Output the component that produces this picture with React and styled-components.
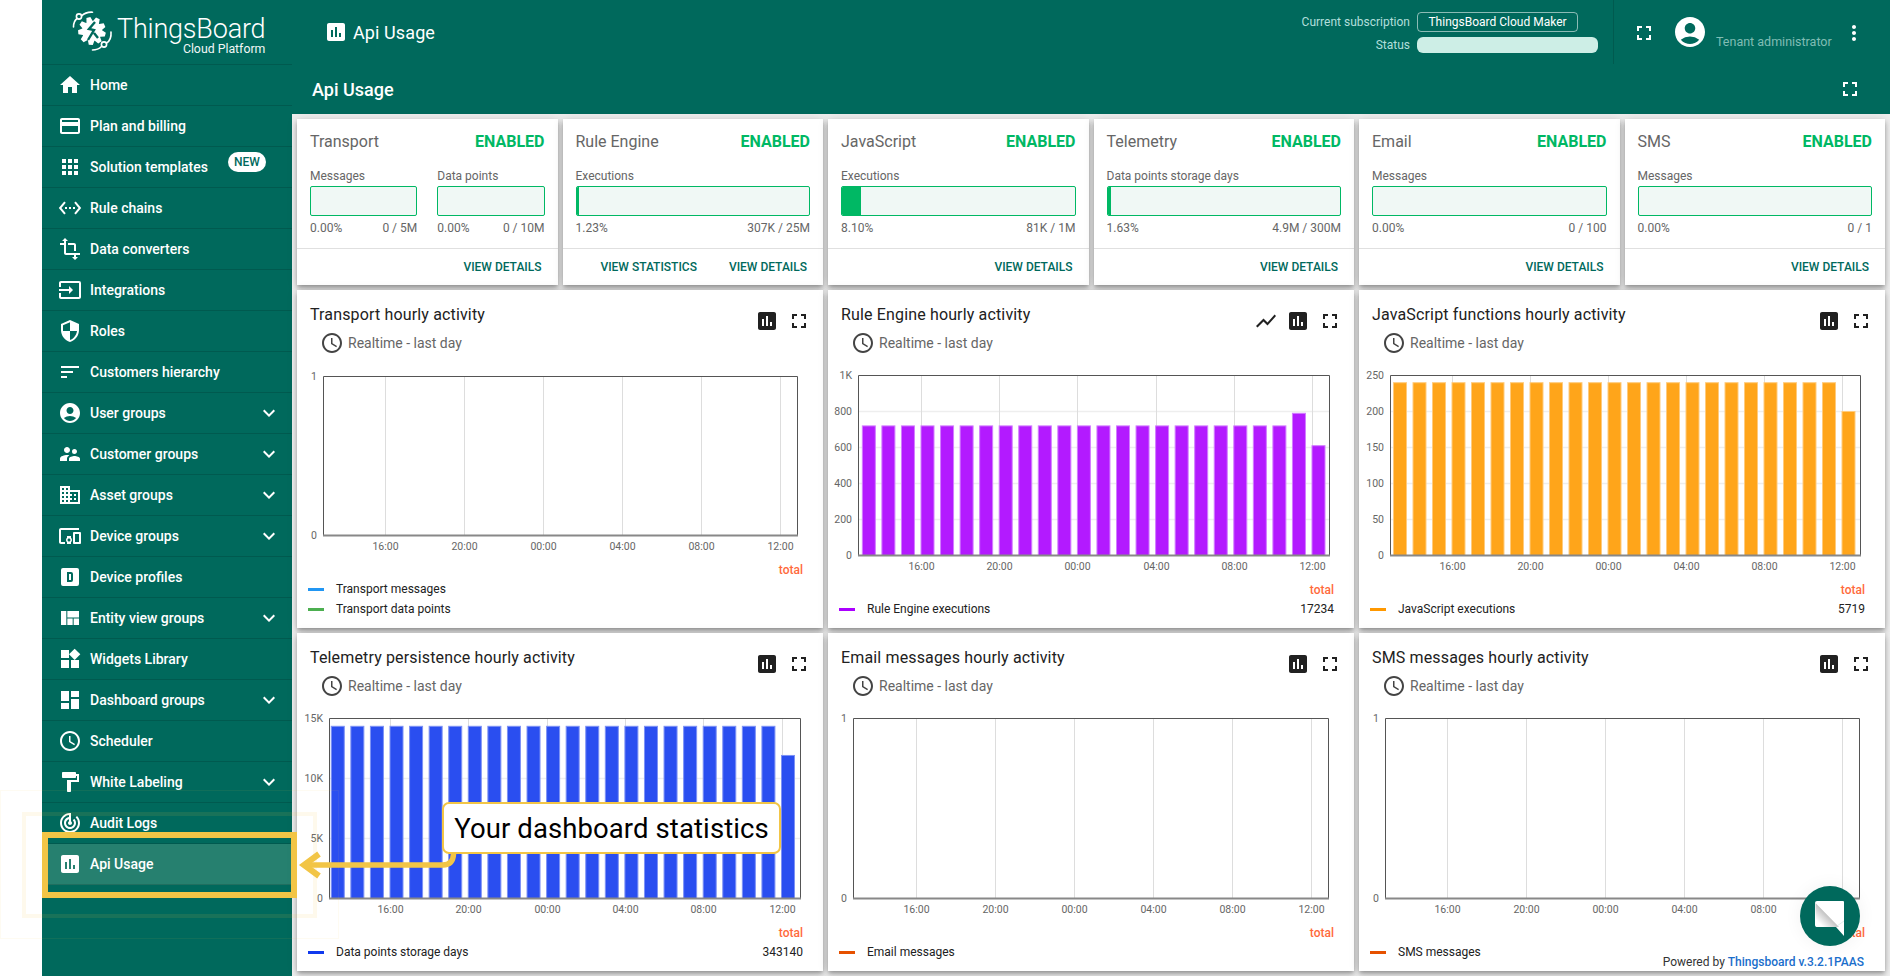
import React from 'react';
import styled, { createGlobalStyle } from 'styled-components';
import {
  MdHome, MdCreditCard, MdApps, MdSettingsEthernet, MdTransform, MdInput, MdSecurity, MdSort,
  MdAccountCircle, MdSupervisorAccount, MdDomain, MdDevicesOther, MdViewQuilt, MdWidgets, MdDashboard,
  MdSchedule, MdFormatPaint, MdTrackChanges, MdInsertChart, MdFullscreen, MdMoreVert, MdKeyboardArrowDown, MdShowChart,
} from 'react-icons/md';

const TEAL = '#00695c';
const GREEN = '#00b864';
const GOLD = '#f2c546';

const Global = createGlobalStyle`
  html, body { margin: 0; padding: 0; background: #fff; }
  body { font-family: Roboto, "Liberation Sans", sans-serif; }
  * { box-sizing: border-box; }
`;

const Page = styled.div`
  position: relative; display: flex; width: 1890px; height: 976px; padding-left: 42px; overflow: hidden;
`;
const Sidebar = styled.aside`
  flex: 0 0 250px; background: ${TEAL}; color: #fff; display: flex; flex-direction: column;
`;
const LogoBar = styled.div`
  height: 65px; display: flex; align-items: flex-start; padding: 10px 0 0 30px; border-bottom: 1px solid rgba(0,0,0,.14);
`;
const LogoWords = styled.div`
  display: flex; flex-direction: column; align-items: flex-end; margin-left: 3px; margin-top: 7px;
`;
const LogoName = styled.div`
  font-size: 27px; font-weight: 300; line-height: 24px; letter-spacing: -.2px;
`;
const LogoSub = styled.div`
  font-size: 12.3px; font-weight: 400; line-height: 13px; margin-top: 2px; opacity: .95;
`;
const NavRow = styled.div`
  position: relative; height: 41px; display: flex; align-items: center; padding: 0 11px 0 16px;
  font-size: 14px; font-weight: 500; border-bottom: 1px solid rgba(0,0,0,.14);
  background: ${p => (p.$active ? '#26806f' : 'transparent')};
`;
const NavIcon = styled.span`
  flex: 0 0 24px; height: 24px; margin-right: 8px; display: flex; color: #fff;
  svg { width: 24px; height: 24px; }
`;
const NavLabel = styled.span` flex: 1; `;
const Chevron = styled(MdKeyboardArrowDown)` width: 24px; height: 24px; `;
const NewBadge = styled.span`
  position: absolute; left: 186px; top: 5px; width: 38px; height: 20px; border-radius: 10px; background: #fff;
  color: ${TEAL}; font-size: 12px; font-weight: 500; line-height: 20px; text-align: center;
`;

const Main = styled.main` flex: 1; min-width: 0; display: flex; flex-direction: column; `;
const TopBar = styled.header`
  height: 64px; background: ${TEAL}; color: #fff; display: flex; align-items: center; padding: 0 24px 0 32px;
`;
const Crumb = styled.div`
  display: flex; align-items: center; flex: 1; font-size: 18px; letter-spacing: .1px;
  svg { width: 24px; height: 24px; margin-right: 5px; }
`;
const Subscription = styled.div`
  display: grid; grid-template-columns: auto 181px; column-gap: 7px; row-gap: 5px; align-items: center;
  padding-right: 15px; height: 64px; align-content: center; border-right: 1px solid rgba(0,0,0,.14);
  font-size: 12px; color: #b2dfdb;
`;
const SubLabel = styled.span` text-align: right; `;
const PlanTag = styled.span`
  justify-self: start; width: 161px; height: 20px; border: 1px solid rgba(255,255,255,.55); border-radius: 4px;
  color: #fff; text-align: center; line-height: 18px;
`;
const StatusPill = styled.span`
  height: 16px; border-radius: 6px; background: #cdeee6;
`;
const IconBtn = styled.span`
  display: flex; width: 24px; height: 24px; color: ${p => p.$color || '#fff'};
  svg { width: 24px; height: 24px; }
`;
const TopActions = styled.div`
  display: flex; align-items: center; padding-left: 18px; padding-top: 2px;
`;
const Avatar = styled(MdAccountCircle)` width: 36px; height: 36px; margin-left: 16px; margin-top: -3px; `;
const UserText = styled.div`
  width: 126px; margin-left: 8px; margin-top: 17px; font-size: 12.5px; color: #80bdb4; white-space: nowrap;
`;
const SubBar = styled.div`
  height: 50px; background: ${TEAL}; color: #fff; display: flex; align-items: center; justify-content: space-between;
  padding: 0 28px 0 20px; font-size: 18px; font-weight: 500;
`;
const Board = styled.div`
  flex: 1; background: #eee; padding: 5px; display: grid; gap: 5px;
  grid-template-columns: repeat(6, 1fr); grid-template-rows: 166px 338px 338px;
`;
const Panel = styled.section`
  background: #fff; box-shadow: 0 2px 4px -1px rgba(0,0,0,.25), 0 4px 5px 0 rgba(0,0,0,.16), 0 1px 10px 0 rgba(0,0,0,.14);
  display: flex; flex-direction: column; min-width: 0;
`;
const Wide = styled(Panel)` grid-column: span 2; position: relative; `;

const CardBody = styled.div` height: 129px; padding: 12px 13px 0; `;
const CardTop = styled.div`
  display: flex; justify-content: space-between; align-items: center; height: 20px; font-size: 16px; color: #666;
`;
const Enabled = styled.span` font-weight: 700; color: ${GREEN}; `;
const Meters = styled.div` display: flex; gap: 20px; margin-top: 17px; `;
const Meter = styled.div` flex: 1; min-width: 0; font-size: 12px; color: #666; `;
const MeterLabel = styled.div` height: 16px; line-height: 16px; margin-bottom: 2px; `;
const Track = styled.div`
  height: 30px; border: 1px solid ${GREEN}; border-radius: 2px; background: #f0f8f5; overflow: hidden;
`;
const Fill = styled.div` height: 100%; background: ${GREEN}; `;
const MeterFoot = styled.div`
  display: flex; justify-content: space-between; height: 16px; line-height: 16px; margin-top: 4px;
`;
const CardFoot = styled.div`
  flex: 1; border-top: 1px solid #e0e0e0; display: flex; justify-content: flex-end; align-items: center;
  gap: 32px; padding-right: 16px; font-size: 12px; font-weight: 500; color: ${TEAL};
`;

const WidgetHead = styled.div` height: 76px; padding: 15px 12px 0 13px; display: flex; justify-content: space-between; `;
const WidgetTitle = styled.div` font-size: 16px; line-height: 20px; color: #212121; letter-spacing: .15px; `;
const TimeRow = styled.div`
  display: flex; align-items: center; height: 24px; margin: 6px 0 0 10px; font-size: 14px; color: #666;
  svg { width: 24px; height: 24px; color: #444; margin-right: 4px; }
`;
const HeadIcons = styled.div` display: flex; gap: 8px; margin-top: 4px; `;
const Plot = styled.svg` display: block; flex: none; `;
const Legend = styled.div` margin-top: auto; padding: 0 20px 9px 11px; font-size: 12px; color: #212121; `;
const TotalHead = styled.div` height: 20px; line-height: 22px; text-align: right; color: #ff6a3c; font-weight: 500; `;
const LegendRow = styled.div` display: flex; align-items: center; height: 20px; `;
const Swatch = styled.span` flex: 0 0 16px; height: 3px; margin-right: 12px; background: ${p => p.$c}; `;
const LegendName = styled.span` flex: 1; `;

const Powered = styled.div`
  position: absolute; right: 26px; bottom: 7px; font-size: 12px; line-height: 14px; color: #333; background: #fff;
  b { color: #1a6ecb; font-weight: 500; }
`;
const HaloOuter = styled.div`
  position: absolute; left: 0; top: 790px; width: 339px; height: 149px; border: 1px solid rgba(242,197,70,.07); pointer-events: none;
`;
const HaloInner = styled.div`
  position: absolute; left: 22px; top: 812px; width: 295px; height: 106px; border: 4px solid rgba(242,197,70,.1); pointer-events: none;
`;
const Frame = styled.div`
  position: absolute; left: 42px; top: 832px; width: 255px; height: 66px; border: 6px solid ${GOLD};
`;
const ArrowArt = styled.svg` position: absolute; left: 297px; top: 848px; `;
const Callout = styled.div`
  position: absolute; left: 442px; top: 802px; width: 339px; height: 52px; background: #fff;
  border: 2px solid ${GOLD}; border-radius: 7px; display: flex; align-items: center; justify-content: center;
  font-size: 27.5px; color: #000; white-space: nowrap; letter-spacing: .1px;
`;
const ChatBubble = styled.div`
  position: absolute; left: 1800px; top: 886px; width: 60px; height: 60px; border-radius: 50%; background: ${TEAL};
  box-shadow: 0 0 18px rgba(0,0,0,.06);
  svg { display: block; }
`;

const DBoxIcon = () => (
  <svg viewBox="0 0 24 24" fill="currentColor">
    <path fillRule="evenodd" d="M5 3h14a2 2 0 0 1 2 2v14a2 2 0 0 1-2 2H5a2 2 0 0 1-2-2V5a2 2 0 0 1 2-2zM9 7v10h4a2 2 0 0 0 2-2V9a2 2 0 0 0-2-2H9zm2 2h2v6h-2V9z" />
  </svg>
);

const gearPath = (() => {
  const pts = [];
  const teeth = 9;
  for (let i = 0; i < teeth; i++) {
    const a = (i / teeth) * Math.PI * 2;
    const w = Math.PI / teeth;
    [[10, -w * 0.95], [14, -w * 0.42], [14, w * 0.42], [10, w * 0.95]].forEach(([r, d]) => {
      pts.push(`${(20 + r * Math.cos(a + d)).toFixed(1)},${(20 + r * Math.sin(a + d)).toFixed(1)}`);
    });
  }
  return pts.join(' ');
})();

const LogoMark = () => (
  <svg width="42" height="44" viewBox="0 0 42 44" fill="none">
    <polygon points={gearPath} fill="#fff" transform="translate(0 1) rotate(15 20 20)" />
    <path d="M23 12 L17 19 L22 20 L16 30 M22 23 L26 28" stroke={TEAL} strokeWidth="2.4" />
    <circle cx="7" cy="6.5" r="2.6" stroke="#fff" strokeWidth="1.6" />
    <path d="M1.5 17 C1.5 12 3 10 5 8.5 M9.5 6 C13 2.5 17 2 20.5 2.2" stroke="#fff" strokeWidth="1.6" strokeLinecap="round" />
    <circle cx="32" cy="34.5" r="2.6" stroke="#fff" strokeWidth="1.6" />
    <path d="M39 22 C39.5 28 37 31.5 34.6 33 M29.5 36.5 C27 39 24 40 20.5 40" stroke="#fff" strokeWidth="1.6" strokeLinecap="round" />
  </svg>
);

const NAV = [
  ['Home', MdHome], ['Plan and billing', MdCreditCard], ['Solution templates', MdApps, false, true],
  ['Rule chains', MdSettingsEthernet], ['Data converters', MdTransform], ['Integrations', MdInput],
  ['Roles', MdSecurity], ['Customers hierarchy', MdSort], ['User groups', MdAccountCircle, true],
  ['Customer groups', MdSupervisorAccount, true], ['Asset groups', MdDomain, true], ['Device groups', MdDevicesOther, true],
  ['Device profiles', DBoxIcon], ['Entity view groups', MdViewQuilt, true], ['Widgets Library', MdWidgets],
  ['Dashboard groups', MdDashboard, true], ['Scheduler', MdSchedule], ['White Labeling', MdFormatPaint, true],
  ['Audit Logs', MdTrackChanges], ['Api Usage', MdInsertChart],
];

const CARDS = [
  { t: 'Transport', m: [['Messages', 0, '0.00%', '0 / 5M'], ['Data points', 0, '0.00%', '0 / 10M']] },
  { t: 'Rule Engine', stats: true, m: [['Executions', 1.23, '1.23%', '307K / 25M']] },
  { t: 'JavaScript', m: [['Executions', 8.1, '8.10%', '81K / 1M']] },
  { t: 'Telemetry', m: [['Data points storage days', 1.63, '1.63%', '4.9M / 300M']] },
  { t: 'Email', m: [['Messages', 0, '0.00%', '0 / 100']] },
  { t: 'SMS', m: [['Messages', 0, '0.00%', '0 / 1']] },
];

const TIMES = ['16:00', '20:00', '00:00', '04:00', '08:00', '12:00'];
const rep = (v, n, ...rest) => [...Array(n).fill(v), ...rest];

const WIDGETS = [
  { t: 'Transport hourly activity', l: 26, r: 500, tick: 87.5, pitch: 79, h: 159, max: 1, ticks: [[0, '0'], [1, '1']],
    legend: [['Transport messages', '#2196f3'], ['Transport data points', '#4caf50']] },
  { t: 'Rule Engine hourly activity', line: true, l: 30, r: 501, tick: 93, pitch: 78.2, h: 180, max: 1000,
    ticks: [[0, '0'], [200, '200'], [400, '400'], [600, '600'], [800, '800'], [1000, '1K']],
    bars: rep(720, 22, 790, 610), fill: '#b31aff', edge: '#d27dff', legend: [['Rule Engine executions', '#ab00ff', '17234']] },
  { t: 'JavaScript functions hourly activity', l: 31, r: 501, tick: 93, pitch: 78, h: 180, max: 250,
    ticks: [[0, '0'], [50, '50'], [100, '100'], [150, '150'], [200, '200'], [250, '250']],
    bars: rep(240, 23, 200), fill: '#ffa51a', edge: '#ffcb7d', legend: [['JavaScript executions', '#ff9800', '5719']] },
  { t: 'Telemetry persistence hourly activity', l: 32, r: 503, tick: 93, pitch: 78.3, h: 180, max: 15000,
    ticks: [[0, '0'], [5000, '5K'], [10000, '10K'], [15000, '15K']],
    bars: rep(14350, 23, 11920), fill: '#2a4ef0', edge: '#7d92f5', legend: [['Data points storage days', '#1039ee', '343140']] },
  { t: 'Email messages hourly activity', l: 25, r: 500, tick: 88, pitch: 79, h: 180, max: 1, ticks: [[0, '0'], [1, '1']],
    legend: [['Email messages', '#e65100']] },
  { t: 'SMS messages hourly activity', l: 26, r: 500, tick: 88, pitch: 79, h: 180, max: 1, ticks: [[0, '0'], [1, '1']],
    legend: [['SMS messages', '#e65100']] },
];

function Chart({ w }) {
  const top = 10.5;
  const H = w.h;
  const bottom = top + H;
  const y = v => top + H - (v / w.max) * H;
  const barPitch = w.pitch / 4;
  const start = w.tick - 3 * barPitch;
  return (
    <Plot width="526" height={H + 34} viewBox={`0 0 526 ${H + 34}`} fontFamily="Roboto, sans-serif" fontSize="10.5" fill="#666">
      {w.ticks.map(([v, label]) => (
        <g key={label}>
          {v > 0 && v < w.max && <line x1={w.l} x2={w.r} y1={y(v)} y2={y(v)} stroke="#eee" strokeWidth="1.5" />}
          <text x={w.l - 6} y={y(v) + 3.5} textAnchor="end">{label}</text>
        </g>
      ))}
      {TIMES.map((label, i) => {
        const x = Math.round(w.tick + w.pitch * i) + 0.5;
        return (
          <g key={label}>
            <line x1={x} x2={x} y1={top} y2={bottom} stroke="#ddd" />
            <text x={x} y={bottom + 14} textAnchor="middle">{label}</text>
          </g>
        );
      })}
      {w.bars && w.bars.map((v, i) => (
        <rect key={i} x={start + barPitch * i} y={y(v)} width={13} height={bottom - y(v)} fill={w.fill} stroke={w.edge} strokeWidth="1" />
      ))}
      <path d={`M${w.l + 0.5} ${bottom}V${top}H${w.r + 0.5}V${bottom}`} fill="none" stroke="#555" />
      <line x1={w.l} x2={w.r + 1} y1={bottom} y2={bottom} stroke="#888" strokeWidth="2" />
    </Plot>
  );
}

const StatusCard = ({ c }) => (
  <Panel>
    <CardBody>
      <CardTop><span>{c.t}</span><Enabled>ENABLED</Enabled></CardTop>
      <Meters>
        {c.m.map(([label, pct, a, b]) => (
          <Meter key={label}>
            <MeterLabel>{label}</MeterLabel>
            <Track><Fill style={{ width: `${pct}%` }} /></Track>
            <MeterFoot><span>{a}</span><span>{b}</span></MeterFoot>
          </Meter>
        ))}
      </Meters>
    </CardBody>
    <CardFoot>
      {c.stats && <span>VIEW STATISTICS</span>}
      <span>VIEW DETAILS</span>
    </CardFoot>
  </Panel>
);

const Widget = ({ w }) => (
  <Wide>
    <WidgetHead>
      <div>
        <WidgetTitle>{w.t}</WidgetTitle>
        <TimeRow><MdSchedule />Realtime - last day</TimeRow>
      </div>
      <HeadIcons>
        {w.line && <IconBtn $color="#212121"><MdShowChart /></IconBtn>}
        <IconBtn $color="#212121"><MdInsertChart /></IconBtn>
        <IconBtn $color="#212121"><MdFullscreen /></IconBtn>
      </HeadIcons>
    </WidgetHead>
    <Chart w={w} />
    <Legend>
      <TotalHead>total</TotalHead>
      {w.legend.map(([name, color, val]) => (
        <LegendRow key={name}>
          <Swatch $c={color} />
          <LegendName>{name}</LegendName>
          {val && <span>{val}</span>}
        </LegendRow>
      ))}
    </Legend>
  </Wide>
);

export default function App() {
  return (
    <Page>
      <Global />
      <Sidebar>
        <LogoBar>
          <LogoMark />
          <LogoWords>
            <LogoName>ThingsBoard</LogoName>
            <LogoSub>Cloud Platform</LogoSub>
          </LogoWords>
        </LogoBar>
        {NAV.map(([label, Icon, more, isNew]) => (
          <NavRow key={label} $active={label === 'Api Usage'}>
            <NavIcon><Icon /></NavIcon>
            <NavLabel>{label}</NavLabel>
            {more && <Chevron />}
            {isNew && <NewBadge>NEW</NewBadge>}
          </NavRow>
        ))}
      </Sidebar>
      <Main>
        <TopBar>
          <Crumb><MdInsertChart />Api Usage</Crumb>
          <Subscription>
            <SubLabel>Current subscription</SubLabel>
            <PlanTag>ThingsBoard Cloud Maker</PlanTag>
            <SubLabel>Status</SubLabel>
            <StatusPill />
          </Subscription>
          <TopActions>
            <IconBtn><MdFullscreen /></IconBtn>
            <Avatar />
            <UserText>Tenant administrator</UserText>
            <IconBtn><MdMoreVert /></IconBtn>
          </TopActions>
        </TopBar>
        <SubBar>
          <span>Api Usage</span>
          <IconBtn><MdFullscreen /></IconBtn>
        </SubBar>
        <Board>
          {CARDS.map(c => <StatusCard key={c.t} c={c} />)}
          {WIDGETS.map(w => <Widget key={w.t} w={w} />)}
        </Board>
      </Main>
      <Powered>Powered by <b>Thingsboard v.3.2.1PAAS</b></Powered>
      <HaloOuter />
      <HaloInner />
      <Frame />
      <ArrowArt width="165" height="36" viewBox="0 0 165 36" fill="none">
        <path d="M7 17H146Q156 17 156.500 6" stroke={GOLD} strokeWidth="5.500" />
        <path d="M22 6L7 17L22 28" stroke={GOLD} strokeWidth="6" />
      </ArrowArt>
      <Callout>Your dashboard statistics</Callout>
      <ChatBubble>
        <svg width="60" height="60" viewBox="0 0 60 60">
          <defs>
            <linearGradient id="chatShade" gradientUnits="userSpaceOnUse" x1="27" y1="29" x2="19" y2="37">
              <stop offset="0" stopColor="#c4c4c4" />
              <stop offset="1" stopColor="#fff" />
            </linearGradient>
          </defs>
          <path d="M17 15H43a1 1 0 0 1 1 1V50L36 41H17a2 2 0 0 1-2-2V17a2 2 0 0 1 2-2z" fill="#fff" />
          <path d="M15.500 17L39 41H17a2 2 0 0 1-1.500-2z" fill="url(#chatShade)" />
          <path d="M37 40L44 35" stroke="#cfe6e2" strokeWidth=".7" />
        </svg>
      </ChatBubble>
    </Page>
  );
}
